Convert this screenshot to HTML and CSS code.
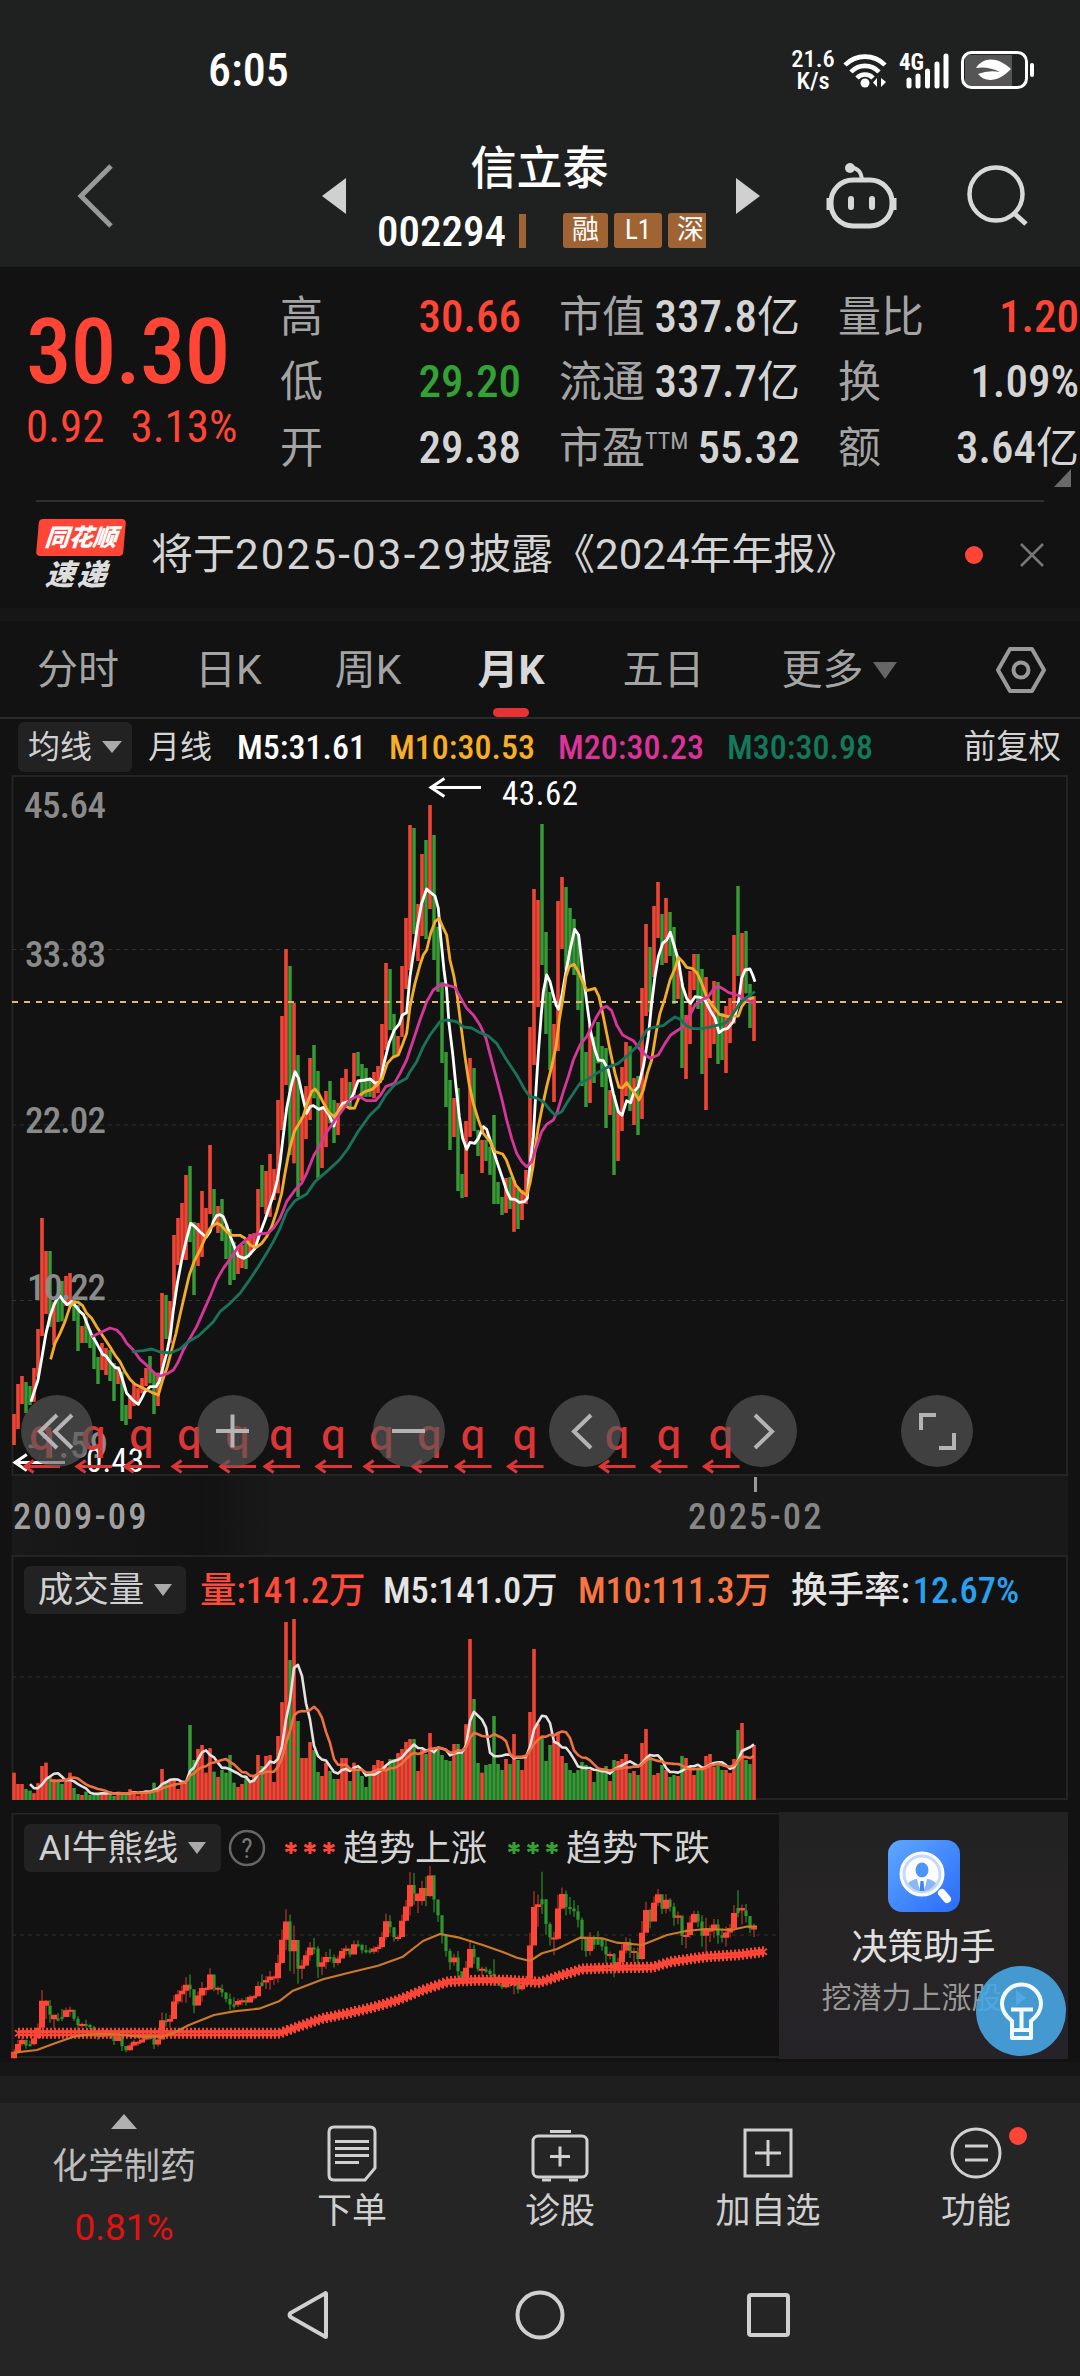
FILE: index.html
```html
<!DOCTYPE html>
<html lang="zh-CN">

<head>
    <meta charset="UTF-8">
    <meta name="viewport" content="width=device-width, initial-scale=1.0">
    <title>信立泰 002294</title>
    <link rel="stylesheet" href="styles.css">
</head>

<body>
    <header class="header">
        <div class="status">
            <span class="time">6:05</span>
            <div class="speed"><span>21.6</span><span>K/s</span></div>
            <svg class="wifi" width="46" height="36" viewBox="0 0 46 36">
                <g fill="none" stroke="#fff" stroke-width="4.6">
                    <path d="M2 13a28 28 0 0 1 40 0" />
                    <path d="M8 20a19 19 0 0 1 28 0" />
                    <path d="M14 26a11 11 0 0 1 16 0" />
                </g>
                <circle cx="22" cy="31" r="4.5" fill="#fff" />
                <path d="M34 26v9l-4-4.500zM38 26v9l5-5z" fill="#fff" />
            </svg>
            <svg class="signal" width="52" height="38" viewBox="0 0 52 38">
                <text class="net" x="0" y="19" textLength="25" lengthAdjust="spacingAndGlyphs">4G</text>
                <path d="M10 29v6M19 25v10M28.500 20v15M38 13v22M47 5v30" stroke="#fff" stroke-width="5" stroke-linecap="round" />
            </svg>
            <svg class="battery" width="74" height="38" viewBox="0 0 74 38">
                <rect x="4" y="4" width="47" height="31" fill="#555" />
                <rect x="1.500" y="1.500" width="64" height="35" rx="9" fill="none" stroke="#fff" stroke-width="3" />
                <path d="M71 14v10" stroke="#fff" stroke-width="4" stroke-linecap="round" />
                <path d="M15 17C22 6 36 5 50 18C38 31 24 32 17 23Q27 19 39 21Q27 15 15 17z" fill="#fff" />
            </svg>
        </div>
        <div class="titlebar">
            <svg class="back" width="38" height="66" viewBox="0 0 38 66">
                <path d="M34 3L4 33L34 63" fill="none" stroke="#999" stroke-width="5" />
            </svg>
            <svg class="prev" width="24" height="36" viewBox="0 0 24 36">
                <path d="M24 0v36L0 18z" fill="#d0d0d0" />
            </svg>
            <div class="stock">
                <h1 class="stock-name">信立泰</h1>
                <div class="stock-code">
                    <span>002294</span><i class="bar"></i>
                    <b class="tag">融</b><b class="tag">L1</b><b class="tag cut">深</b>
                </div>
            </div>
            <svg class="next" width="24" height="36" viewBox="0 0 24 36">
                <path d="M0 0v36L24 18z" fill="#d0d0d0" />
            </svg>
            <svg class="robot" width="72" height="68" viewBox="0 0 72 68">
                <g fill="none" stroke="#d8d8d8" stroke-width="5">
                    <rect x="5" y="18" width="61" height="46" rx="22" />
                    <path d="M36 18C35 9 32 7 25 5" stroke-width="4" />
                    <path d="M2.500 36v12M68.500 36v12" stroke-width="4" />
                    <path d="M25 37v8M46 37v8" stroke-width="6" stroke-linecap="round" />
                </g>
                <circle cx="24" cy="6" r="5" fill="#d8d8d8" />
            </svg>
            <svg class="search" width="62" height="62" viewBox="0 0 62 62">
                <circle cx="29" cy="29" r="26.500" fill="none" stroke="#d8d8d8" stroke-width="4.500" />
                <path d="M48 49l11 10" stroke="#d8d8d8" stroke-width="5" />
            </svg>
        </div>
    </header>

    <section class="quote">
        <div class="price up">
            <div class="last">30.30</div>
            <div class="change"><span>0.92</span><span>3.13%</span></div>
        </div>
        <dl class="facts">
            <div><dt>高</dt><dd class="up">30.66</dd></div>
            <div><dt>低</dt><dd class="down">29.20</dd></div>
            <div><dt>开</dt><dd>29.38</dd></div>
        </dl>
        <dl class="facts">
            <div><dt>市值</dt><dd>337.8<em>亿</em></dd></div>
            <div><dt>流通</dt><dd>337.7<em>亿</em></dd></div>
            <div><dt>市盈<sup>TTM</sup></dt><dd>55.32</dd></div>
        </dl>
        <dl class="facts">
            <div><dt>量比</dt><dd class="up">1.20</dd></div>
            <div><dt>换</dt><dd>1.09%</dd></div>
            <div><dt>额</dt><dd>3.64<em>亿</em></dd></div>
        </dl>
        <i class="corner"></i>
    </section>

    <section class="news">
        <div class="news-logo">
            <span class="logo-top">同花顺</span>
            <span class="logo-bottom">速递</span>
        </div>
        <p class="news-text">将于<span class="date">2025-03-29</span>披露《2024年年报》</p>
        <i class="dot"></i>
        <svg class="close" width="24" height="24" viewBox="0 0 24 24">
            <path d="M1 1l22 22M23 1L1 23" stroke="#777" stroke-width="2.500" />
        </svg>
    </section>

    <nav class="tabs">
        <span class="tab">分时</span>
        <span class="tab">日K</span>
        <span class="tab">周K</span>
        <span class="tab active">月K</span>
        <span class="tab">五日</span>
        <span class="tab more">更多<i class="caret"></i></span>
        <svg class="setting" width="50" height="48" viewBox="0 0 50 48">
            <path d="M14 3h22l12 21l-12 21h-22l-12-21z" fill="none" stroke="#999" stroke-width="4" stroke-linejoin="round" />
            <circle cx="25" cy="24" r="7.500" fill="none" stroke="#999" stroke-width="4" />
        </svg>
    </nav>

    <div class="ma-row">
        <span class="picker">均线<i class="caret"></i></span>
        <span class="ma period">月线</span>
        <span class="ma m5">M5:31.61</span>
        <span class="ma m10">M10:30.53</span>
        <span class="ma m20">M20:30.23</span>
        <span class="ma m30">M30:30.98</span>
        <span class="adjust">前复权</span>
    </div>

    <div class="kline">
        <svg class="plot" id="kline" width="1080" height="701" viewBox="0 775 1080 701"></svg>
        <div class="tools">
            <span class="tool"><svg width="72" height="72" viewBox="0 0 72 72"><path d="M36 20L19 36.500L36 53M51 20L34 36.500L51 53" /></svg></span>
            <span class="tool"><svg width="72" height="72" viewBox="0 0 72 72"><path d="M19 36h33M35.500 19.500v33" /></svg></span>
            <span class="tool"><svg width="72" height="72" viewBox="0 0 72 72"><path d="M19 36h33" /></svg></span>
            <span class="tool"><svg width="72" height="72" viewBox="0 0 72 72"><path d="M42 20L25 36.500L42 53" /></svg></span>
            <span class="tool"><svg width="72" height="72" viewBox="0 0 72 72"><path d="M30 20L47 36.500L30 53" /></svg></span>
            <span class="tool"><svg width="72" height="72" viewBox="0 0 72 72"><path d="M35 20H20V35M53 38V53H38" /></svg></span>
        </div>
    </div>
    <div class="dates">
        <span class="from">2009-09</span>
        <span class="to">2025-02</span>
    </div>

    <div class="volume">
        <div class="row">
            <span class="picker">成交量<i class="caret"></i></span>
            <span class="vol up">量:141.2万</span>
            <span class="vol">M5:141.0万</span>
            <span class="vol v10">M10:111.3万</span>
            <span class="vol turn">换手率:<b>12.67%</b></span>
        </div>
        <svg class="plot" id="volume" width="1080" height="245" viewBox="0 1555 1080 245"></svg>
    </div>

    <div class="trend">
        <div class="row">
            <span class="picker">AI牛熊线<i class="caret"></i></span>
            <svg class="help" width="38" height="38" viewBox="0 0 38 38">
                <circle cx="19" cy="19" r="17" fill="none" stroke="#666" stroke-width="2.500" />
                <text class="ask" x="19" y="28.500" text-anchor="middle">?</text>
            </svg>
            <svg class="stars up" width="52" height="16" viewBox="0 0 52 16">
                <path d="M7 2v12M1.500 5l11 6M12.500 5l-11 6M26 2v12M20.500 5l11 6M31.500 5l-11 6M45 2v12M39.500 5l11 6M50.500 5l-11 6" />
            </svg>
            <span class="legend">趋势上涨</span>
            <svg class="stars down" width="52" height="16" viewBox="0 0 52 16">
                <path d="M7 2v12M1.500 5l11 6M12.500 5l-11 6M26 2v12M20.500 5l11 6M31.500 5l-11 6M45 2v12M39.500 5l11 6M50.500 5l-11 6" />
            </svg>
            <span class="legend">趋势下跌</span>
        </div>
        <svg class="plot" id="trend" width="1080" height="246" viewBox="0 1813 1080 246"></svg>
        <aside class="helper">
            <svg width="72" height="72" viewBox="0 0 72 72">
                <defs>
                    <linearGradient id="blue" x1="0" y1="0" x2="1" y2="1">
                        <stop offset="0" stop-color="#5fa8ff" />
                        <stop offset="1" stop-color="#2a6bfa" />
                    </linearGradient>
                </defs>
                <rect width="72" height="72" rx="14" fill="url(#blue)" />
                <circle cx="34" cy="34" r="21" fill="#fff" stroke="#fff" stroke-width="3" />
                <circle cx="34" cy="34" r="18" fill="#fff" stroke="#c3d9fb" stroke-width="3" />
                <ellipse cx="34" cy="30" rx="6.500" ry="7.500" fill="#4d94fb" />
                <path d="M20 43q5-4 9-4l3 12q-8-1-12-8zM48 43q-5-4-9-4l-3 12q8-1 12-8z" fill="#8bb7f7" />
                <path d="M32.500 41h3l1 10h-5z" fill="#3d86f5" />
                <path d="M54 53l5 6" stroke="#fff" stroke-width="8" stroke-linecap="round" />
            </svg>
            <strong>决策助手</strong>
            <small>挖潜力上涨股<i></i></small>
        </aside>
        <div class="bulb">
            <svg width="90" height="90" viewBox="0 0 90 90">
                <g fill="none" stroke="#f4fbff" stroke-width="4">
                    <path d="M36 64V55C31 51 26 46 26 38a19.500 19.500 0 0 1 39 0C65 46 60 51 55 55V64z" />
                    <path d="M36 64v8h19v-8" stroke-linejoin="round" />
                    <path d="M35 43.500h22M45.500 44v20" />
                </g>
            </svg>
        </div>
    </div>

    <footer class="bottom">
        <div class="sector">
            <svg width="26" height="15" viewBox="0 0 26 15"><path d="M0 15L13 0L26 15z" fill="#b0b0b0" /></svg>
            <span class="sector-name">化学制药</span>
            <span class="sector-change">0.81%</span>
        </div>
        <div class="action order">
            <svg width="60" height="60" viewBox="0 0 60 60">
                <path d="M12 4h36q5 0 5 5v36l-10 12H12q-5 0-5-5V9q0-5 5-5z" />
                <path d="M13 18.500h34M13 25.500h34M13 32.500h34M13 39.500h24" />
            </svg>
            <span>下单</span>
        </div>
        <div class="action diagnose">
            <svg width="60" height="60" viewBox="0 0 60 60">
                <rect x="3" y="13" width="54" height="41" rx="5" />
                <path d="M20 8.500h21M30 23.500v20M20 33.500h20M12 57h9M39 57h9" />
            </svg>
            <span>诊股</span>
        </div>
        <div class="action add">
            <svg width="60" height="60" viewBox="0 0 60 60">
                <rect x="7" y="7" width="46" height="46" />
                <path d="M30 17v26M17 30h26" />
            </svg>
            <span>加自选</span>
        </div>
        <div class="action func">
            <svg width="60" height="60" viewBox="0 0 60 60">
                <circle cx="30" cy="30" r="24" />
                <path d="M19 23h23M19 37h23" />
            </svg>
            <span>功能</span>
            <i class="dot"></i>
        </div>
    </footer>
    <div class="sysnav">
        <svg width="44" height="52" viewBox="0 0 44 52"><path d="M40 4.500v43q0 1-1 0L4.500 28q-2-2 0-4L39 4.500q1-1 1 0z" /></svg>
        <svg width="50" height="50" viewBox="0 0 50 50"><circle cx="25" cy="25" r="22.500" /></svg>
        <svg width="46" height="48" viewBox="0 0 46 48"><rect x="3" y="4" width="39" height="40" rx="2" /></svg>
    </div>

    <script src="chart.js"></script>
</body>

</html>
```
FILE: styles.css
```css
* {
    box-sizing: border-box;
}

body {
    margin: 0;
    width: 1080px;
    height: 2376px;
    overflow: hidden;
    background-color: #121212;
    color: #d4d4d4;
    font-family: Roboto, "Noto Sans CJK SC", sans-serif;
    font-stretch: 75%;
}

svg {
    display: block;
    flex: none;
}

i,
em {
    font-style: normal;
}

.up {
    color: #ff4636;
}

.down {
    color: #33a133;
}

/* header */
.header {
    height: 267px;
    background-color: #1f2120;
}

.status {
    height: 140px;
    padding: 0 45px 0 208px;
    display: flex;
    align-items: center;
    color: #fff;
}

.time {
    font-size: 46px;
    font-weight: 500;
    line-height: 60px;
    margin-right: auto;
}

.speed {
    width: 44px;
    margin-right: 8px;
    display: flex;
    flex-direction: column;
    align-items: center;
    font-size: 24.5px;
    font-weight: 500;
    line-height: 22px;
}

.wifi {
    margin-right: 10px;
}

.net {
    font-size: 24px;
    font-weight: 700;
    fill: #fff;
}

.signal {
    margin-right: 10px;
}

.titlebar {
    height: 111px;
    padding-left: 77px;
    display: flex;
    align-items: center;
}

.prev {
    margin-left: 207px;
}

.stock {
    width: 390px;
    padding: 8px 0 0 32px;
}

.stock-name {
    margin: 0 45px 0 0;
    padding-left: 10px;
    text-align: center;
    font-size: 46px;
    font-weight: 500;
    line-height: 62px;
    color: #fff;
}

.stock-code {
    display: flex;
    align-items: center;
    height: 64px;
    margin-left: -1px;
    font-size: 43px;
    font-weight: 500;
    color: #fff;
}

.bar {
    width: 7px;
    height: 34px;
    margin: 0 37px 0 13px;
    background-color: #a06434;
}

.tag {
    width: 45px;
    height: 35px;
    margin-right: 6px;
    border-radius: 3px;
    background-color: #a06434;
    font-size: 27px;
    font-weight: 400;
    line-height: 34px;
    text-align: center;
}

.tag + .tag {
    width: 48px;
}

.tag.cut {
    width: 38px;
    padding-left: 9px;
    margin: 0;
    text-align: left;
    border-radius: 3px 0 0 3px;
}

.robot {
    margin: 0 69px 0 66px;
}

/* quote */
.quote {
    position: relative;
    height: 235px;
    padding: 17px 0 0 26px;
    display: grid;
    grid-template-columns: 254px 241px 279px 279px;
}

.facts + .facts {
    padding-left: 38px;
}

.quote::after {
    content: "";
    position: absolute;
    left: 36px;
    bottom: 0;
    width: 1008px;
    height: 2px;
    background-color: #303030;
}

.last {
    margin-top: 16px;
    font-size: 91px;
    font-weight: 500;
    line-height: 104px;
    letter-spacing: -0.8px;
}

.change {
    display: flex;
    gap: 26px;
    font-size: 45px;
    line-height: 46px;
}

.facts {
    margin: 0;
}

.facts div {
    height: 65.5px;
    display: flex;
    align-items: center;
    justify-content: space-between;
    line-height: 60px;
    white-space: nowrap;
}

.facts dt {
    font-size: 43px;
    color: #a4a4a4;
}

.facts dd {
    margin: 0;
    font-size: 45px;
    font-weight: 500;
}

.facts em {
    font-size: 43px;
    font-weight: 400;
}

.facts sup {
    font-size: 24px;
    line-height: 0;
    vertical-align: 14px;
}

.corner {
    position: absolute;
    left: 1054px;
    top: 202px;
    border-left: 17px solid transparent;
    border-bottom: 18px solid #6a6a6a;
}

/* news */
.news {
    height: 119px;
    padding: 0 36px;
    display: flex;
    align-items: center;
    border-bottom: 13px solid #161616;
}

.news-logo {
    width: 87px;
    height: 72px;
    text-align: center;
    transform: skewX(-5deg);
}

.logo-top {
    display: block;
    height: 37px;
    border-radius: 4px;
    background-color: #ff4636;
    color: #fff;
    font-size: 24px;
    font-weight: 900;
    font-style: italic;
    line-height: 38px;
}

.logo-bottom {
    display: block;
    font-size: 29px;
    font-weight: 900;
    font-style: italic;
    letter-spacing: 3px;
    line-height: 38px;
    color: #ddd;
}

.news-text {
    margin: 0 auto 0 28px;
    font-size: 42px;
    font-stretch: 100%;
    line-height: 60px;
}

.date {
    letter-spacing: 2.2px;
}

.dot {
    width: 18px;
    height: 18px;
    border-radius: 50%;
    background-color: #ff4636;
}

.close {
    margin-left: 37px;
}

/* tabs */
.tabs {
    height: 98px;
    padding: 2px 34px 0 37px;
    display: flex;
    align-items: center;
    border-bottom: 2px solid #2a2a2a;
    font-size: 41px;
    line-height: 60px;
    color: #a4a4a4;
}

.tab {
    font-stretch: 100%;
    margin-right: 77px;
}

.tab:nth-child(1),
.tab:nth-child(3) {
    margin-right: 76px;
}

.tab:nth-child(2) {
    margin-right: 73px;
}

.tab.active {
    position: relative;
    color: #d8d8d8;
    font-weight: 700;
    margin-right: 78px;
}

.tab.active::after {
    content: "";
    position: absolute;
    left: 50%;
    bottom: -17px;
    width: 36px;
    height: 9px;
    margin-left: -18px;
    border-radius: 5px;
    background-color: #e63232;
}

.tab.more {
    display: flex;
    align-items: center;
    margin-right: auto;
}

.caret {
    border: 10px solid transparent;
    border-top: 12px solid #aaa;
    border-bottom: 0;
}

.more .caret {
    margin-left: 9px;
    border-width: 17px 12px 0;
    border-top-color: #666;
}

/* moving averages */
.ma-row {
    height: 56px;
    padding: 0 19px 0 18px;
    display: flex;
    align-items: center;
    font-size: 34px;
    line-height: 50px;
}

.picker {
    display: flex;
    align-items: center;
    justify-content: center;
    gap: 10px;
    border-radius: 6px;
    background-color: #222;
    color: #d0d0d0;
}

.ma-row .picker {
    width: 114px;
    height: 50px;
    font-size: 32px;
}

.ma {
    font-weight: 500;
}

.period {
    font-size: 32px;
    font-weight: 400;
    margin: 0 25px 0 16px;
}

.m5 {
    width: 152px;
    color: #fff;
}

.m10 {
    width: 169px;
    color: #f8af26;
}

.m20 {
    width: 169px;
    color: #dc3399;
}

.m30 {
    color: #14785a;
}

.adjust {
    margin-left: auto;
    font-size: 32.5px;
}

/* monthly chart */
.kline {
    position: relative;
    height: 701px;
}

.frame {
    fill: none;
    stroke: #242424;
    stroke-width: 2;
}

.grid {
    stroke: #303030;
    stroke-width: 1.2;
    stroke-dasharray: 4 4;
}

.now {
    stroke: #dcb981;
    stroke-width: 2;
    stroke-dasharray: 6 6;
}

.level {
    font-size: 37px;
    fill: #8a8a8a;
    font-weight: 500;
}

.mark {
    font-size: 33px;
    fill: #fff;
}

.arrow {
    fill: none;
    stroke: #fff;
    stroke-width: 3;
}

.event {
    font-family: "Noto Sans CJK SC", sans-serif;
    font-size: 40px;
    font-weight: 500;
    fill: #dc3535;
}

.event-arrow {
    fill: none;
    stroke: #dc3535;
    stroke-width: 3;
}

.line {
    fill: none;
    stroke-linejoin: round;
}

.tools {
    position: absolute;
    left: 21px;
    top: 620px;
    display: flex;
    gap: 104px;
}

.tool {
    border-radius: 50%;
    background-color: rgba(89, 89, 89, 0.65);
}

.tool path {
    fill: none;
    stroke: #b4b4b4;
    stroke-width: 4;
}

.dates {
    height: 79px;
    margin: 0 12px;
    padding: 3px 1px 0;
    display: flex;
    align-items: center;
    background: linear-gradient(90deg, #191919 0, #121212 190px, #191919 260px);
    font-size: 36.5px;
    font-weight: 500;
    line-height: 50px;
    color: #a0a0a0;
    letter-spacing: 2.1px;
}

.to {
    position: relative;
    margin-left: 541px;
    color: #868686;
}

.to::before {
    content: "";
    position: absolute;
    left: 66px;
    top: -15px;
    width: 3px;
    height: 15px;
    background-color: #999;
}

.dates .from,
.dates .to {
    width: 134px;
    white-space: nowrap;
}

/* volume and trend panels */
.volume,
.trend {
    position: relative;
}

.volume {
    height: 258px;
}

.trend {
    height: 249px;
}

.row {
    position: absolute;
    left: 0;
    top: 11px;
    height: 48px;
    width: 1080px;
    padding-left: 24px;
    display: flex;
    align-items: center;
    font-size: 36.5px;
    line-height: 48px;
}

.row .picker {
    width: 162px;
    height: 48px;
    font-size: 35.5px;
}

.row .caret {
    border-width: 12px 9px 0;
}

.vol {
    padding-top: 2px;
    font-weight: 500;
    color: #e4e4e4;
    width: 195px;
}

.vol.up {
    margin-left: 14px;
    width: 183px;
    color: #ff4a38;
}

.vol.v10 {
    width: 213px;
    color: #f87440;
}

.vol.turn {
    width: auto;
}

.turn b {
    margin-left: 3px;
    font-weight: 500;
    color: #28a0f0;
}

.trend .row .picker {
    width: 197px;
    font-stretch: 100%;
}

.help {
    margin-left: 7px;
}

.ask {
    font-size: 27px;
    fill: #777;
}

.stars {
    margin-left: 18px;
    margin-right: 7px;
    fill: none;
    stroke: currentColor;
    stroke-width: 3;
}

.legend {
    padding-top: 1px;
    font-size: 36px;
}

.legend + .stars {
    margin-left: 20px;
}

.helper {
    position: absolute;
    left: 779px;
    top: -1px;
    width: 289px;
    height: 247px;
    padding-top: 28px;
    background: linear-gradient(#222, #272425 50%, #252328);
    display: flex;
    flex-direction: column;
    align-items: center;
}

.helper strong {
    margin-top: 11px;
    font-size: 36px;
    font-weight: 400;
    line-height: 50px;
    color: #e0e0e0;
}

.helper small {
    display: flex;
    align-items: center;
    gap: 14px;
    font-size: 30px;
    line-height: 50px;
    color: #999;
}

.helper small i {
    border: 8px solid transparent;
    border-left: 10px solid #aaa;
    border-right: 0;
}

.bulb {
    position: absolute;
    left: 976px;
    top: 153px;
    border-radius: 50%;
    background-color: rgba(72, 166, 228, 0.9);
}

/* bottom bar */
.bottom {
    height: 173px;
    display: flex;
    margin-top: 14px;
    border-top: 27px solid #1e1e1e;
    box-shadow: 0 -14px #161616;
    background-color: #252525;
    color: #d0d0d0;
}

.sector {
    width: 248px;
    padding-top: 11px;
    display: flex;
    flex-direction: column;
    align-items: center;
    color: #bcbcbc;
}

.sector-name {
    margin-top: 13px;
    font-size: 36px;
    line-height: 50px;
}

.sector-change {
    margin-top: 11px;
    font-size: 37px;
    font-stretch: 100%;
    line-height: 50px;
    color: #e01212;
}

.action {
    position: relative;
    width: 208px;
    padding-top: 20px;
    display: flex;
    flex-direction: column;
    align-items: center;
    font-size: 35px;
    line-height: 50px;
}

.action svg {
    fill: none;
    stroke: #d0d0d0;
    stroke-width: 3;
}

.action span {
    margin-top: 4px;
}

.func .dot {
    position: absolute;
    left: 137px;
    top: 24px;
}

.sysnav {
    height: 127px;
    padding: 4px 0 0 286px;
    display: flex;
    align-items: center;
    background-color: #252525;
}

.sysnav svg {
    fill: none;
    stroke: #d0d0d0;
    stroke-width: 4;
}

.sysnav svg + svg {
    margin-left: 185px;
}

.sysnav svg + svg + svg {
    margin-left: 181px;
}
```
FILE: chart.js
```js
// [high, low, rising] per month, in thirds of a pixel below y = 770
const months = [
    [1932,2025,1],[1842,1977,1],[1818,1902,1],[1836,1929,0],[1848,1905,0],[1794,1895,1],[1677,1820,1],[1344,1698,1],[1443,1632,1],[1443,1670,0],
    [1595,1725,1],[1572,1656,0],[1533,1654,0],[1518,1608,1],[1509,1610,1],[1590,1653,0],[1605,1743,0],[1668,1719,1],[1640,1719,0],[1680,1734,0],
    [1700,1797,0],[1761,1842,0],[1719,1800,1],[1734,1815,1],[1740,1833,0],[1780,1893,0],[1788,1842,1],[1805,1953,0],[1905,1965,0],[1875,1947,1],
    [1840,1908,1],[1855,1900,1],[1824,1870,1],[1794,1848,1],[1758,1840,0],[1805,1932,0],[1808,1908,1],[1569,1820,1],[1575,1707,0],[1593,1720,1],
    [1395,1605,1],[1344,1485,1],[1299,1470,1],[1215,1470,1],[1188,1416,0],[1356,1575,0],[1359,1488,1],[1263,1461,1],[1314,1395,1],[1125,1332,1],
    [1257,1356,0],[1308,1389,1],[1287,1413,0],[1365,1467,0],[1377,1545,0],[1415,1530,0],[1428,1512,1],[1425,1494,1],[1415,1497,0],[1392,1455,1],
    [1390,1440,1],[1257,1410,1],[1185,1311,0],[1203,1332,1],[1152,1340,1],[1197,1290,1],[990,1270,1],[738,1080,1],[537,945,1],[588,1155,0],
    [698,1180,1],[855,1280,0],[1040,1233,1],[948,1107,1],[864,1050,1],[825,985,0],[903,1224,0],[1010,1194,1],[963,1131,1],[933,1060,0],
    [990,1119,0],[999,1095,1],[924,1020,1],[897,1000,1],[936,1015,0],[849,975,1],[846,918,0],[882,980,0],[894,980,0],[925,980,0],
    [906,985,1],[888,969,1],[762,930,1],[579,840,1],[597,780,0],[732,860,0],[798,855,1],[588,800,1],[444,657,1],[165,600,1],
    [174,492,0],[402,573,1],[252,498,1],[210,507,0],[105,417,1],[195,570,0],[470,665,0],[637,879,0],[846,1011,0],[930,1140,0],
    [984,1101,1],[954,1263,0],[1212,1284,0],[1053,1281,1],[864,1101,1],[894,1083,0],[1080,1158,0],[1110,1209,1],[1110,1173,0],[1130,1214,0],
    [1035,1302,0],[1236,1302,0],[1281,1335,0],[1224,1329,1],[1221,1317,0],[1230,1385,1],[1257,1377,0],[1260,1350,1],[1200,1302,1],[771,1200,1],
    [357,885,1],[390,711,1],[162,585,0],[486,792,0],[666,900,0],[762,996,1],[393,843,1],[321,537,1],[351,600,0],[414,590,0],
    [447,615,0],[495,720,0],[620,948,0],[846,1011,0],[765,999,1],[800,939,0],[756,880,0],[828,951,0],[834,1074,0],[960,1035,1],
    [975,1215,0],[1020,1173,1],[891,1083,1],[816,978,1],[828,1023,0],[924,1065,1],[918,1095,0],[654,1047,1],[462,738,1],[531,726,0],
    [408,621,1],[336,504,1],[432,585,0],[384,579,1],[426,558,0],[471,702,0],[560,687,1],[640,894,0],[735,927,1],[603,822,1],
    [552,660,1],[552,717,0],[597,912,0],[621,1020,1],[700,864,1],[633,822,1],[636,882,0],[730,870,0],[708,909,1],[684,819,1],
    [495,760,1],[348,618,0],[489,690,1],[483,670,0],[642,774,0],[678,813,1]
];

// top of each volume bar in thirds of a pixel below y = 1540, bars stand on 780
const volumes = [
    698,732,732,747,752,760,730,678,668,712,718,722,732,725,698,744,762,765,755,765,760,763,757,757,757,768,757,760,765,748,
    753,767,753,752,752,728,742,687,725,717,718,747,722,728,555,660,627,615,698,625,695,711,690,698,645,728,741,732,708,720,
    708,645,678,648,645,726,588,487,246,360,237,543,654,654,606,630,696,708,668,693,717,717,654,654,723,668,693,708,741,705,
    675,660,663,680,657,657,640,627,606,597,597,693,630,642,579,640,622,645,660,663,612,612,640,553,297,477,669,698,675,672,
    528,672,690,657,672,582,660,690,650,516,327,552,590,663,615,605,580,648,669,690,699,690,666,675,690,726,693,685,678,723,
    660,663,657,642,699,693,705,609,567,650,705,699,675,690,711,705,708,648,654,680,705,685,690,648,642,680,675,690,690,699,
    657,570,549,660,672,615
];

// averages of the monthly chart, same units, x in thirds too
const m30 = "395,1745 430,1742 455,1737 480,1746 510,1749 540,1737 565,1715 595,1698 620,1675 640,1655 660,1625 690,1600 720,1570 745,1535 775,1490 800,1450 820,1415 840,1375 860,1325 885,1292 920,1272 945,1235 980,1205 1018,1170 1043,1137 1074,1085 1110,1035 1136,1010 1157,975 1183,945 1220,925 1230,905 1250,875 1270,830 1290,795 1305,775 1320,755 1340,750 1370,755 1390,771 1415,774 1440,788 1465,798 1490,820 1520,870 1550,915 1575,960 1590,980 1610,984 1630,995 1650,1020 1665,1035 1685,1025 1700,1000 1720,970 1740,940 1760,930 1790,910 1820,893 1855,880 1890,850 1915,825 1940,780 1960,772 1990,767 2005,755 2025,741 2040,748 2060,768 2080,776 2105,776 2135,770 2175,760 2190,745 2205,722 2220,700 2240,682 2265,665";
const m20 = "275,1700 300,1688 330,1674 350,1680 365,1695 380,1720 400,1740 420,1768 445,1790 465,1812 480,1818 500,1812 520,1800 535,1775 550,1740 568,1708 590,1670 610,1625 630,1580 650,1530 670,1495 695,1460 715,1430 740,1408 770,1393 805,1389 820,1375 840,1345 860,1295 885,1260 905,1240 920,1210 942,1155 961,1125 981,1085 1002,1055 1028,1020 1049,990 1074,978 1100,992 1126,992 1142,975 1157,950 1183,940 1200,910 1220,870 1240,810 1260,750 1280,695 1300,660 1320,645 1340,645 1365,652 1380,680 1400,715 1420,735 1440,765 1458,805 1472,860 1488,920 1505,985 1520,1050 1535,1105 1550,1150 1565,1175 1580,1190 1595,1175 1610,1130 1625,1085 1640,1063 1660,1050 1672,1025 1690,965 1705,920 1720,870 1740,825 1760,800 1775,770 1790,740 1805,715 1820,709 1835,722 1850,765 1868,795 1900,812 1925,845 1950,865 1975,855 1995,820 2012,795 2030,783 2050,770 2070,735 2085,705 2105,690 2125,680 2140,658 2155,649 2170,657 2185,667 2220,678 2240,690 2262,700";
const m10 = "152,1768 165,1720 180,1690 195,1655 210,1610 222,1596 235,1597 248,1607 260,1630 275,1645 290,1670 310,1700 330,1730 345,1755 360,1775 375,1805 390,1828 405,1843 430,1855 455,1867 475,1875 488,1830 502,1790 515,1740 528,1690 540,1635 555,1570 568,1515 582,1475 600,1440 615,1405 630,1375 650,1359 662,1365 680,1385 695,1396 720,1396 735,1405 750,1425 768,1433 785,1420 800,1400 815,1370 830,1325 845,1270 855,1210 868,1140 883,1085 909,1040 925,990 935,965 945,957 956,970 971,1000 987,1028 1002,1040 1018,1020 1033,1005 1049,1015 1064,1014 1080,975 1095,965 1116,958 1131,945 1147,925 1162,880 1178,862 1195,855 1207,825 1220,790 1230,710 1245,640 1260,585 1270,555 1280,540 1292,490 1305,455 1317,445 1328,470 1340,495 1350,570 1362,620 1372,680 1382,760 1395,860 1407,940 1420,1000 1435,1050 1450,1090 1470,1115 1485,1145 1508,1152 1519,1170 1532,1205 1547,1245 1564,1265 1580,1275 1590,1240 1599,1190 1605,1140 1615,1070 1625,1020 1640,950 1655,890 1668,830 1678,750 1688,690 1698,620 1708,590 1722,583 1735,605 1748,635 1760,662 1785,655 1797,680 1808,730 1820,790 1832,850 1845,910 1857,952 1868,953 1880,938 1892,955 1905,970 1917,990 1930,960 1942,910 1955,870 1968,790 1980,730 1995,685 2010,630 2025,595 2035,562 2048,575 2060,592 2078,596 2092,610 2105,640 2120,680 2140,710 2158,733 2185,740 2215,738 2225,710 2240,690 2262,683";
const m5 = "93,1895 114,1830 126,1760 138,1690 150,1640 162,1605 172,1585 180,1578 190,1592 202,1604 215,1594 228,1610 240,1625 250,1633 265,1670 275,1695 290,1720 308,1753 318,1758 330,1775 345,1792 357,1796 368,1830 380,1870 400,1892 415,1903 425,1885 435,1865 450,1850 468,1850 478,1835 488,1795 500,1750 512,1690 520,1620 532,1540 545,1470 560,1405 572,1360 585,1370 600,1385 618,1402 630,1385 640,1355 650,1337 660,1334 670,1340 680,1365 692,1402 705,1435 715,1458 732,1465 745,1458 765,1435 780,1390 795,1350 810,1305 822,1270 832,1230 840,1180 847,1120 860,1015 873,950 885,905 896,925 909,985 920,1030 930,1010 940,1007 956,1018 971,1012 987,1035 1002,1068 1012,1030 1028,1000 1049,993 1059,975 1074,933 1095,930 1111,927 1126,940 1141,935 1152,880 1167,820 1183,780 1198,762 1207,735 1220,728 1230,620 1242,540 1252,470 1265,400 1280,357 1292,368 1305,378 1315,415 1322,500 1332,600 1340,660 1347,760 1358,850 1368,950 1378,1040 1388,1105 1400,1138 1410,1117 1424,1120 1435,1105 1450,1070 1460,1078 1475,1125 1489,1170 1506,1220 1521,1265 1532,1287 1545,1288 1558,1297 1573,1295 1582,1285 1586,1230 1593,1160 1600,1100 1608,960 1615,850 1624,730 1630,665 1640,615 1650,635 1660,675 1668,705 1676,718 1685,680 1698,605 1710,540 1724,478 1736,495 1748,600 1760,695 1773,790 1785,840 1795,870 1810,872 1825,900 1840,970 1855,1025 1866,1036 1880,992 1892,998 1902,965 1915,950 1930,890 1945,800 1955,700 1965,620 1975,560 1988,520 2000,510 2011,487 2022,525 2035,570 2048,650 2060,685 2072,700 2085,680 2100,682 2115,690 2130,720 2145,745 2157,788 2170,778 2182,776 2200,755 2215,700 2225,625 2235,600 2250,597 2258,615 2265,635";

const centre = i => 14 + 4 * i;

function bars(items, width, color) {
    const d = items.map(b => `M${b[0]} ${b[1].toFixed(1)}V${b[2].toFixed(1)}`).join("");
    return `<path d="${d}" fill="none" stroke="${color}" stroke-width="${width}"/>`;
}

function line(points, color, width = 2.6) {
    return `<polyline class="line" points="${points}" stroke="${color}" stroke-width="${width}"/>`;
}

function hline(cls, y, x2 = 1066) {
    return `<path class="${cls}" d="M12 ${y}H${x2}"/>`;
}

function leftArrow(cls, x, y, length, head) {
    return `<path class="${cls}" d="M${x + length} ${y}H${x}M${x + head * 1.6} ${y - head}L${x + 1} ${y}L${x + head * 1.6} ${y + head}"/>`;
}

function text(cls, x, y, width, value) {
    return `<text class="${cls}" x="${x}" y="${y}" textLength="${width}" lengthAdjust="spacing">${value}</text>`;
}

function twoTone(items) {
    const rise = items.filter(b => b[3]);
    const fall = items.filter(b => !b[3]);
    return bars(rise, 4, "#c8281c") + bars(fall, 4, "#176b17")
        + bars(rise, 2.8, "#e24a3a") + bars(fall, 2.8, "#3d963b");
}

function drawKline() {
    const candles = months.map((m, i) => [centre(i), 770 + m[0] / 3, 770 + m[1] / 3, m[2]]);
    const thirds = s => `<g transform="translate(0 770) scale(.33333)">${s}</g>`;
    let out = `<path class="frame" d="M12.500 776H1067V1475H12.500z"/>`;
    out += [949.5, 1125, 1300.5].map(y => hline("grid", y)).join("");
    out += twoTone(candles);
    out += hline("now", 1002);
    out += thirds(line(m5, "#fff", 8.5) + line(m10, "#f3ab2b", 8.5) + line(m20, "#d6359a", 8.5) + line(m30, "#19735a", 8.5));
    out += text("level", 24, 818, 82, "45.64") + text("level", 25, 967, 81, "33.83") + text("level", 25, 1133, 81, "22.02")
        + text("level", 27, 1300, 79, "10.22") + text("level", 27, 1458, 81, "-1.59");
    out += leftArrow("arrow", 430, 787.5, 51, 9) + text("mark", 502, 805, 76, "43.62");
    out += leftArrow("arrow", 14, 1462.5, 51, 8) + text("mark", 86, 1472, 58, "0.43");
    [24, 76, 124, 172, 220, 264, 316, 364, 412, 455.5, 507.5, 599.5, 651.5, 703.5].forEach(x => {
        out += `<text class="event" x="${x + 5}" y="1449">q</text>` + leftArrow("event-arrow", x, 1466.5, 36, 6);
    });
    document.getElementById("kline").innerHTML = out;
}

function movingAverage(list, n) {
    const points = [];
    for (let i = n - 1; i < list.length; i++) {
        const sum = list.slice(i - n + 1, i + 1).reduce((a, b) => a + b, 0);
        points.push(`${centre(i)},${(1540 + sum / n / 3).toFixed(1)}`);
    }
    return points.join(" ");
}

function drawVolume() {
    const items = volumes.map((v, i) => [centre(i), 1540 + v / 3, 1800, months[i][2]]);
    document.getElementById("volume").innerHTML = `<path class="frame" d="M12.500 1556H1067V1799H12.500z"/>`
        + hline("grid", 1677) + twoTone(items)
        + line(movingAverage(volumes, 5), "#e6e0de") + line(movingAverage(volumes, 10), "#f07040");
}

function interpolate(points, x) {
    for (let i = 1; i < points.length; i++) {
        const [x0, y0] = points[i - 1];
        const [x1, y1] = points[i];
        if (x <= x1) return y0 + (y1 - y0) * (x - x0) / (x1 - x0);
    }
    return points[points.length - 1][1];
}

function drawTrend() {
    const y = v => 1866 + (v - 105) * 0.3005 / 3;
    const close = m => m[2] ? m[0] + (m[1] - m[0]) * 0.3 : m[1] - (m[1] - m[0]) * 0.35;
    const wicks = months.map((m, i) => [centre(i), y(m[0]), y(m[1]), m[2]]);
    const bodies = months.map((m, i) => {
        const open = i ? close(months[i - 1]) : m[1];
        const a = y(Math.min(open, close(m)));
        const b = y(Math.max(open, close(m)));
        return [centre(i), a, Math.max(b, a + 2), m[2]];
    });
    let out = `<path class="frame" d="M12.500 1813.500H1067V2057H12.500z"/>` + hline("grid", 1935, 779);
    out += bars(wicks.filter(b => b[3]), 1.6, "#8f2e24") + bars(wicks.filter(b => !b[3]), 1.6, "#22701f");
    out += bars(bodies.filter(b => !b[3]), 3.2, "#2f962d") + bars(bodies.filter(b => b[3]), 6, "#ff4636");

    const support = [[19, 2033.3], [279, 2033.3], [298, 2026.7], [323, 2018.3], [348, 2013.3], [373, 2007.3], [398, 2000], [423, 1990],
        [448, 1981.7], [473, 1980.3], [507, 1980.3], [540, 1982.3], [557, 1976.7], [582, 1969], [617, 1967.7], [652, 1967.3],
        [671, 1961.7], [706, 1956.7], [736, 1955], [764, 1951.7]];
    let stars = "";
    for (let x = 19; x <= 763; x += 4) {
        const c = interpolate(support, x);
        stars += `M${x} ${c - 5.5}v11M${x - 4} ${c - 3}l8 6M${x + 4} ${c - 3}l-8 6`;
    }
    out += `<path d="${stars}" fill="none" stroke="#ff4636" stroke-width="1.900"/>`;
    out += line("14,2052.7 37,2050 55,2043.3 75,2036.3 90,2034.3 114,2034 139,2036.7 162,2036.7 174,2032.7 189,2025 214,2015 234,2011.3 259,2008.7 279,2001.3 293,1990.7 323,1979.3 353,1971.7 378,1965.7 403,1956.7 423,1941 440,1934 458,1937.3 482,1944.7 502,1951.7 517,1957.7 530,1961 542,1953.3 557,1949 580,1937.7 602,1938.3 617,1942.7 642,1945 667,1935 686,1931 706,1929 731,1930 746,1926.7 757,1926.7", "#cc7a2a", 2.2);
    document.getElementById("trend").innerHTML = out;
}

drawKline();
drawVolume();
drawTrend();
```
